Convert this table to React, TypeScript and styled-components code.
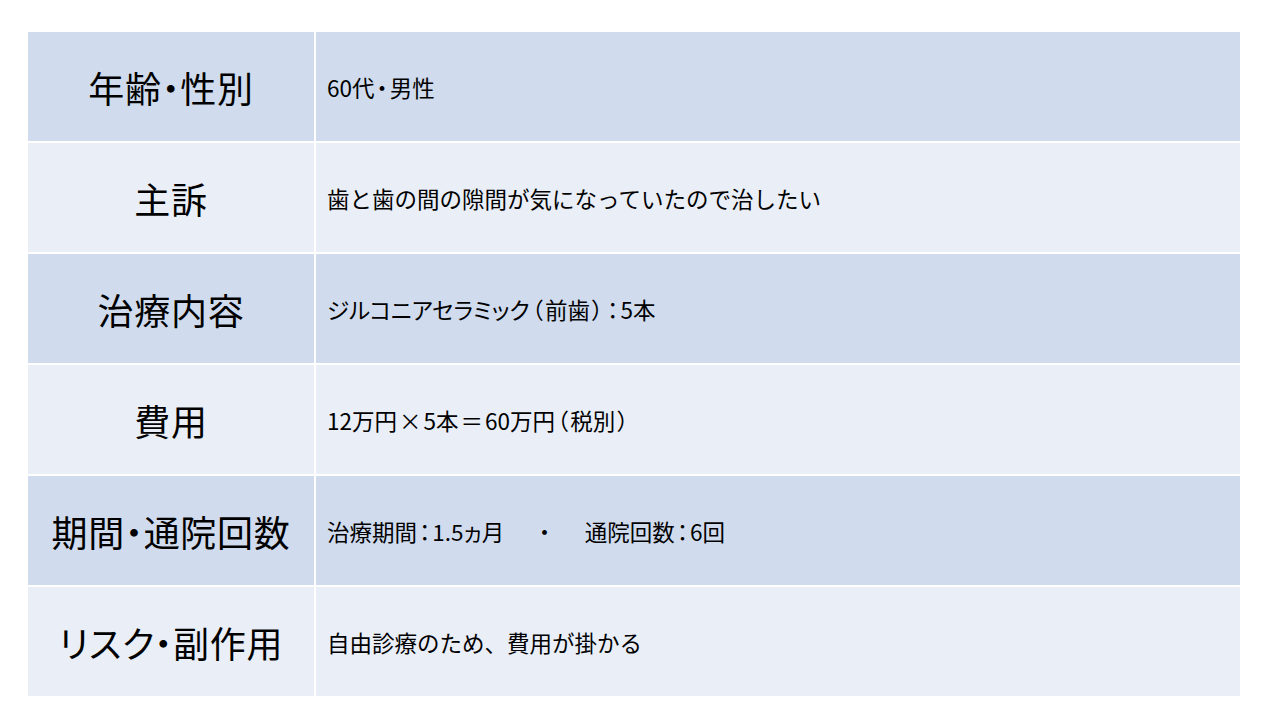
import React from 'react';
import styled, { createGlobalStyle } from 'styled-components';

const GlobalStyle = createGlobalStyle`
  html, body {
    margin: 0;
    padding: 0;
    background: #ffffff;
  }
  body {
    font-family: "Noto Sans CJK JP", "Noto Sans", sans-serif;
    color: #000;
  }
`;

const Page = styled.div`
  width: 1280px;
  height: 720px;
  box-sizing: border-box;
  padding: 32px 40px 0 28px;
  background: #ffffff;
`;

const Table = styled.div`
  display: flex;
  flex-direction: column;
  gap: 2px;
  background: #ffffff;
`;

const Row = styled.div`
  display: grid;
  grid-template-columns: 286px 1fr;
  column-gap: 2px;
  height: 109px;
`;

const HeadCell = styled.div<{ $tone: 'dark' | 'light' }>`
  display: flex;
  align-items: center;
  justify-content: center;
  background: ${(p) => (p.$tone === 'dark' ? '#d0dcee' : '#e9eef7')};
  font-size: 36px;
  font-feature-settings: 'palt';
  letter-spacing: 0.02em;
  color: #000;
`;

const BodyCell = styled.div<{ $tone: 'dark' | 'light' }>`
  display: flex;
  align-items: center;
  padding-left: 11px;
  background: ${(p) => (p.$tone === 'dark' ? '#d0dcee' : '#e9eef7')};
  font-size: 22.5px;
  color: #000;
  white-space: pre;
`;

// full-width punctuation and katakana are set proportionally, as in the original slide
const Tight = styled.span<{ $pad?: boolean }>`
  font-feature-settings: 'palt';
  padding: 0 ${(p) => (p.$pad ? '2px' : '0')};
`;

const PUNCT = /^[・：（）＝×]$/;
const KANA = /^[ァ-ヶー]+$/;

const withTightText = (text: string) =>
  text.split(/([・：（）＝×]|[ァ-ヶー]+)/).map((part, i) => {
    if (PUNCT.test(part)) return <Tight key={i} $pad>{part}</Tight>;
    if (KANA.test(part)) return <Tight key={i}>{part}</Tight>;
    return part;
  });

const rows = [
  { head: '年齢・性別', body: '60代・男性' },
  { head: '主訴', body: '歯と歯の間の隙間が気になっていたので治したい' },
  { head: '治療内容', body: 'ジルコニアセラミック（前歯）：5本' },
  { head: '費用', body: '12万円×5本＝60万円（税別）' },
  { head: '期間・通院回数', body: '治療期間：1.5ヵ月　  ・  　通院回数：6回' },
  { head: 'リスク・副作用', body: '自由診療のため、費用が掛かる' },
];

export default function App() {
  return (
    <>
      <GlobalStyle />
      <Page>
        <Table>
          {rows.map((r, i) => {
            const tone = i % 2 === 0 ? 'dark' : 'light';
            return (
              <Row key={r.head}>
                <HeadCell $tone={tone}>{r.head}</HeadCell>
                <BodyCell $tone={tone}>{withTightText(r.body)}</BodyCell>
              </Row>
            );
          })}
        </Table>
      </Page>
    </>
  );
}
